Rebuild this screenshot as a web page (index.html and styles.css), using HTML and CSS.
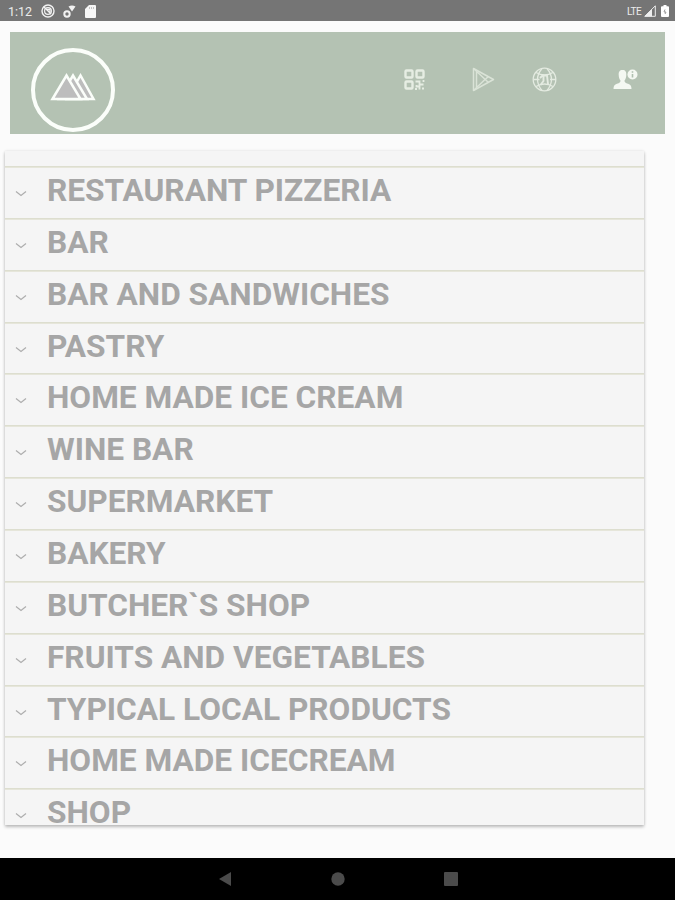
FILE: index.html
```html
<!DOCTYPE html>
<html lang="en">
<head>
  <meta charset="UTF-8">
  <title>Categories</title>
  <link rel="stylesheet" href="styles.css">
</head>
<body>
<div class="status">
  <span class="time">1:12</span>
  <svg class="st-sync" width="14" height="14" viewBox="0 0 14 14" fill="none" stroke="#f2f2f2">
    <circle cx="7" cy="7" r="6" stroke-width="1.4"/>
    <circle cx="7" cy="7" r="3.4" stroke-width="1.2"/>
    <path d="M3 3l7 7M6 5.500h3v3" stroke-width="1.3"/>
  </svg>
  <svg class="st-key" width="13" height="13" viewBox="0 0 13 13">
    <circle cx="4" cy="9" r="2.700" fill="none" stroke="#f2f2f2" stroke-width="2"/>
    <path d="M5.500 1.500Q9-.5 12.500 1.500L9 6.500z" fill="#f2f2f2"/>
  </svg>
  <svg class="st-card" width="11" height="13" viewBox="0 0 11 13">
    <path d="M4 0h6q1 0 1 1v11q0 1-1 1H1q-1 0-1-1V4z" fill="#f7f7f7"/>
    <path d="M4.500 2v2M6.500 2v2M8.500 2v2" stroke="#c4c4c4"/>
  </svg>
  <span class="lte">LTE</span>
  <svg class="st-signal" width="12" height="12" viewBox="0 0 12 12">
    <path d="M.8 11.300H11.300V.8z" fill="none" stroke="#eee"/>
    <path d="M.5 11.500H8V4z" fill="#eee"/>
  </svg>
  <svg class="st-battery" width="8" height="12" viewBox="0 0 8 12">
    <path d="M2.500 0h3v1.300H7q1 0 1 1V11q0 1-1 1H1q-1 0-1-1V2.300q0-1 1-1h1.500z" fill="#fff"/>
    <path d="M4 4.500L3 7h2L4 9" fill="none" stroke="#999"/>
  </svg>
</div>

<div class="header">
  <svg class="logo" width="86" height="86" viewBox="0 0 86 86">
    <circle cx="43" cy="43" r="40" fill="none" stroke="#fbfefa" stroke-width="4"/>
    <g fill="#bdbdbd" stroke="#fbfefa" stroke-width="2.500">
      <path d="M37 52L50.500 28.500 63.500 52z"/>
      <path d="M29 52L43 28.500 57 52z"/>
      <path d="M22.500 52L36.500 28.500 50.500 52z"/>
    </g>
  </svg>
  <div class="menu">
    <svg width="21" height="21" viewBox="0 0 21 21" fill="none" stroke="#e6ede3" stroke-width="2.400">
      <rect x="1.500" y="1.500" width="7" height="7" rx="1"/>
      <rect x="12.500" y="1.500" width="7" height="7" rx="1"/>
      <rect x="1.500" y="12.500" width="7" height="7" rx="1"/>
      <path d="M11.500 12.500h4v3h4M19.500 11v2M12.500 16v1.500h3v3M18 19.500h2M11 20h2" stroke-width="1.800"/>
    </svg>
    <svg width="23" height="25" viewBox="0 0 23 25" fill="none" stroke="#dae3d7" stroke-width="1.500" stroke-linejoin="round">
      <path d="M1.500 1.500L21.500 12.500 1.500 23.500z"/>
      <path d="M2 2L16.500 15.500M2 23L13 12.500l3.500-3M4.500 4v17"/>
    </svg>
    <svg width="25" height="25" viewBox="0 0 25 25" fill="none" stroke="#e4ebe1" stroke-width="1.300">
      <circle cx="12.500" cy="12.500" r="11.300"/>
      <path d="M1.500 12.500h6M18 12.500h6M4 5.500q8.500 5 17 0M4 19.500q8.500-5 17 0M10 1.500q-9 11 0 22M15 1.500q9 11 0 22"/>
      <path d="M8 11l2.500-2.500H15l1 8.500M11.500 9v5l-3 4" stroke-width="1.900"/>
    </svg>
    <svg width="25" height="21" viewBox="0 0 25 21">
      <path d="M9.500 1C6.500 1 5.500 3 5.700 6c.1 3 1 4.500 1.800 5.500 0 2-1 2.500-3.500 3.300C1.500 15.600.5 17 .5 20h18c0-3-1-4.400-3.500-5.200-2.500-.8-3.500-1.300-3.500-3.300.8-1 1.700-2.500 1.800-5.500C13.500 3 12.500 1 9.500 1z" fill="#f4f8f2"/>
      <circle cx="19.500" cy="5.500" r="5" fill="#f4f8f2"/>
      <path d="M19.500 2.300v1.500M19.500 5v3.500" stroke="#aebfae" stroke-width="1.600"/>
    </svg>
  </div>
</div>

<div class="card">
  <ul class="list"></ul>
</div>

<div class="nav">
  <svg width="14" height="16" viewBox="0 0 14 16"><path d="M13 1v14L1 8z" fill="#4b4b4b"/></svg>
  <svg width="14" height="14" viewBox="0 0 14 14"><circle cx="7" cy="7" r="6.700" fill="#4b4b4b"/></svg>
  <svg width="14" height="14" viewBox="0 0 14 14"><rect width="14" height="14" rx="1" fill="#4b4b4b"/></svg>
</div>
<script>
  const names = [
    "RESTAURANT PIZZERIA", "BAR", "BAR AND SANDWICHES", "PASTRY",
    "HOME MADE ICE CREAM", "WINE BAR", "SUPERMARKET", "BAKERY",
    "BUTCHER`S SHOP", "FRUITS AND VEGETABLES", "TYPICAL LOCAL PRODUCTS",
    "HOME MADE ICECREAM", "SHOP"
  ];
  const arrow = '<svg class="chevron" width="12" height="8" viewBox="0 0 12 8"><path d="M1 1.500L6 5.500l5-4" fill="none" stroke="#adadad" stroke-width="1.200"/></svg>';

  document.querySelector(".list").innerHTML = names.map(function (name) {
    return '<li class="row">' + arrow + '<span class="name">' + name + '</span></li>';
  }).join("");
</script>
</body>
</html>
```
FILE: styles.css
```css
* {
  margin: 0;
  padding: 0;
  box-sizing: border-box;
}
body {
  display: flex;
  flex-direction: column;
  height: 900px;
  background: #fbfbfb;
  font-family: Roboto, sans-serif;
  overflow: hidden;
}
svg {
  display: block;
  flex: none;
}
.status {
  display: flex;
  align-items: center;
  height: 21px;
  padding: 1px 6px 0 8px;
  background: #757575;
  color: #ececec;
}
.time {
  width: 33px;
  font-size: 12.5px;
}
.st-key {
  margin-left: 8px;
}
.st-card {
  margin-left: 9px;
}
.lte {
  margin-left: auto;
  font-size: 10px;
  letter-spacing: -0.6px;
}
.st-signal {
  margin-left: 3px;
}
.st-battery {
  margin-left: 5px;
}
.header {
  display: flex;
  align-items: flex-start;
  justify-content: space-between;
  height: 102px;
  margin: 11px 10px 0;
  padding: 15px 27px 0 20px;
  background: #b4c2b3;
}
.menu {
  display: flex;
  align-items: center;
  height: 25px;
  margin-top: 20px;
}
.menu svg:nth-child(2) {
  margin-left: 47px;
}
.menu svg:nth-child(3) {
  margin-left: 37px;
}
.menu svg:nth-child(4) {
  margin-left: 56px;
}
.card {
  width: 639px;
  height: 674px;
  margin: 17px 0 0 5px;
  padding-top: 15px;
  background: #f5f5f5;
  box-shadow: 0 2px 3px rgba(0, 0, 0, 0.24), 0 0 3px rgba(0, 0, 0, 0.1);
  overflow: hidden;
}
.list {
  list-style: none;
}
.row {
  display: flex;
  height: 51.87px;
  padding-left: 10px;
  border-top: 1px solid #dddecf;
  box-shadow: inset 0 1px #e6e6da;
}
.chevron {
  margin-top: 23px;
}
.name {
  margin-left: 20px;
  padding-top: 5px;
  font-size: 31.65px;
  font-weight: bold;
  line-height: 38px;
  color: #a6a6a6;
  white-space: nowrap;
}
.nav {
  display: flex;
  align-items: center;
  justify-content: center;
  gap: 99px;
  height: 42px;
  margin-top: auto;
  background: #000;
}
```
